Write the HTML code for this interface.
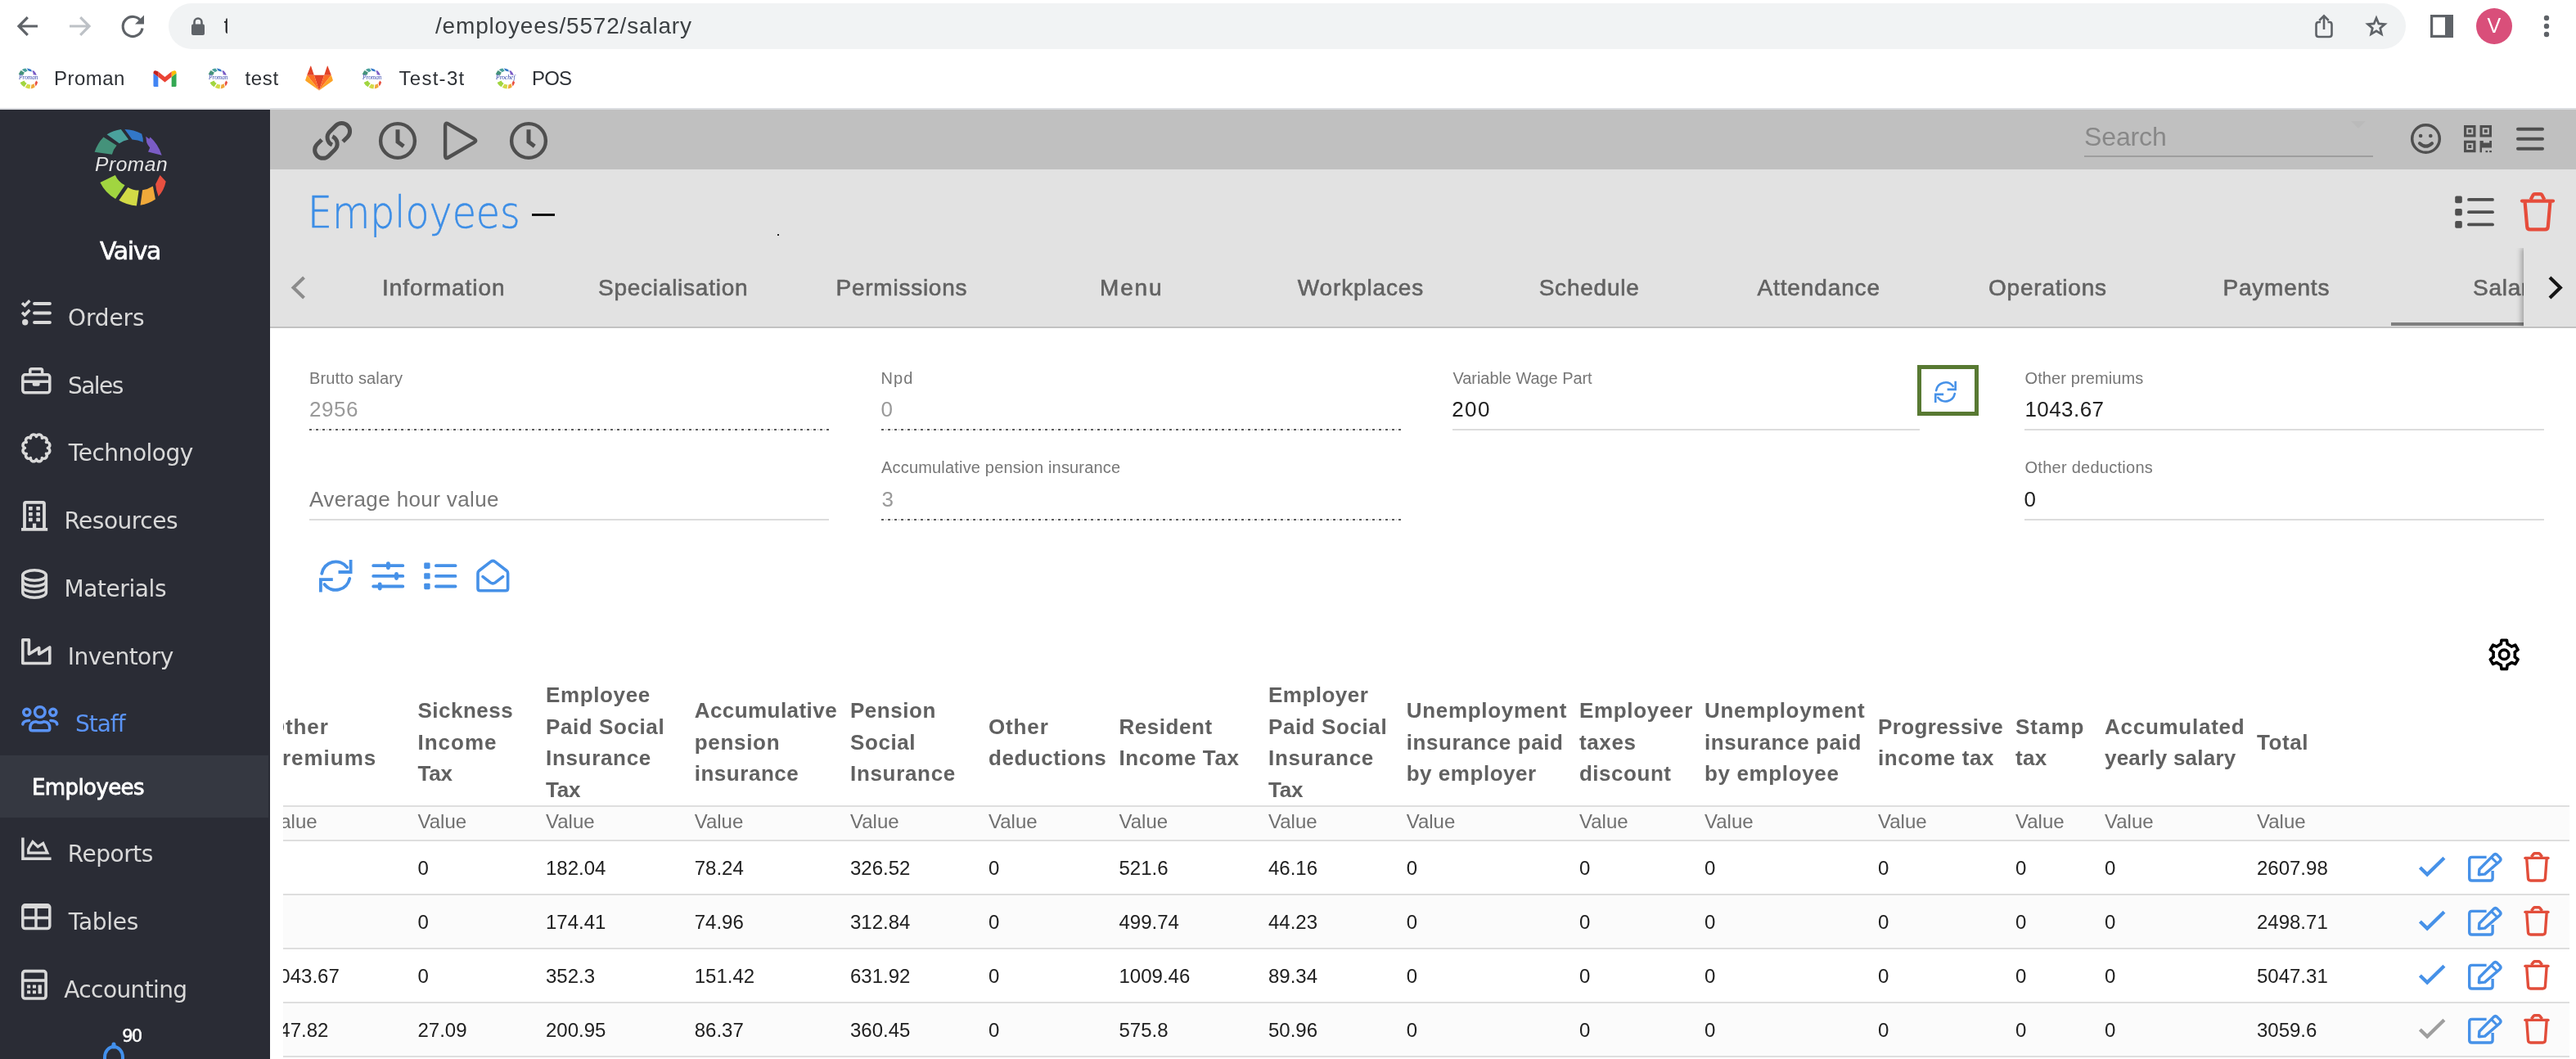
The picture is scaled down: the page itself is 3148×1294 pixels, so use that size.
<!DOCTYPE html>
<html lang="en"><head><meta charset="utf-8"><title>Employees – salary</title>
<style>
html,body{margin:0;padding:0}
body{width:3148px;height:1294px;overflow:hidden;position:relative;background:#fff;font-family:"Liberation Sans",sans-serif}
table{font-family:"Liberation Sans",sans-serif}
#root{position:absolute;left:0;top:0;width:3148px;height:1294px;overflow:hidden;will-change:transform}
th,td{padding:0;text-align:left;white-space:nowrap;overflow:visible}
tr.h th{height:156px;box-sizing:border-box;font-weight:bold;font-size:26px;line-height:38.5px;color:#616161;letter-spacing:0.3px;vertical-align:middle;border-bottom:2px solid #dedede}
tr.h th div{position:relative;top:0.5px}
tr.v td{height:42px;box-sizing:border-box;font-size:24px;line-height:24px;color:#707070;background:#fbfbfb;border-bottom:2px solid #dedede;padding-top:6px;vertical-align:top}
tr.r td{height:66px;box-sizing:border-box;font-size:24px;line-height:24px;color:#212121;border-bottom:2px solid #dedede;padding-top:20.5px;vertical-align:top}
tr.alt td{background:#fbfbfb}
</style></head>
<body>
<div id="root">
<div id="chrome" style="position:absolute;left:0;top:0;width:3148px;height:134px;background:#fff;">
<div style="position:absolute;left:0;top:132px;width:3148px;height:2px;background:#dadce0"></div>
<div style="position:absolute;left:206px;top:4px;width:2734px;height:56px;border-radius:28px;background:#f1f3f4"></div>
<svg style="position:absolute;left:0;top:0" width="3148" height="64" viewBox="0 0 3148 64" fill="none" stroke-linecap="butt" stroke-linejoin="miter">
<path d="M46 32 H24 M33.8 21.2 L23 32 L33.8 42.8" stroke="#5f6368" stroke-width="3.2"/>
<path d="M85 32 H108 M98.2 21.2 L109 32 L98.2 42.8" stroke="#bdc1c6" stroke-width="3.2"/>
<path d="M172.6 26.5 A12 12 0 1 0 174 34.5" stroke="#5f6368" stroke-width="3.2"/>
<path d="M176 18.5 V29.5 H165 Z" fill="#5f6368"/>
<rect x="234" y="29.5" width="16" height="13.5" rx="2" fill="#5f6368"/><path d="M237.5 30 V27 A4.5 4.5 0 0 1 246.5 27 V30" stroke="#5f6368" stroke-width="2.6"/>
<path d="M2836 27 H2833.5 Q2830.5 27 2830.5 30 V42 Q2830.5 45 2833.5 45 H2846.5 Q2849.5 45 2849.5 42 V30 Q2849.5 27 2847 27 H2844.5" stroke="#5f6368" stroke-width="2.6"/>
<path d="M2840 36 V20 M2834.3 25 L2840 19.3 L2845.7 25" stroke="#5f6368" stroke-width="2.6"/>
<polygon points="2904.00,22.00 2906.88,28.94 2914.37,29.53 2908.66,34.41 2910.41,41.72 2904.00,37.80 2897.59,41.72 2899.34,34.41 2893.63,29.53 2901.12,28.94" stroke="#5f6368" stroke-width="2.7" stroke-linejoin="miter"/>
<rect x="2971.6" y="19.6" width="24.8" height="24.8" stroke="#5f6368" stroke-width="3.2"/><rect x="2988" y="19" width="10" height="27" fill="#5f6368"/>
<circle cx="3112" cy="22" r="3.2" fill="#5f6368"/>
<circle cx="3112" cy="32" r="3.2" fill="#5f6368"/>
<circle cx="3112" cy="42" r="3.2" fill="#5f6368"/>
</svg>
<div style="position:absolute;left:3026px;top:10px;width:44px;height:44px;border-radius:22px;background:#d94f7a"></div>
<span style="position:absolute;white-space:nowrap;left:3039.50px;top:19.14px;font:normal normal 25px/25px 'Liberation Sans',sans-serif;color:#fff;">V</span>
<span style="position:absolute;white-space:nowrap;left:273.50px;top:17.80px;font:normal normal 28px/28px 'Liberation Sans',sans-serif;color:#202124;clip-path:inset(0 3.5px 0 0);">t</span>
<span style="position:absolute;white-space:nowrap;left:532.00px;top:17.80px;font:normal normal 28px/28px 'Liberation Sans',sans-serif;color:#3c4043;letter-spacing:0.823px;">/employees/5572/salary</span>
<svg style="position:absolute;left:0;top:0" width="660" height="134" viewBox="0 0 660 134"><g transform="translate(-8.26 41.18) scale(0.2681)"><path fill="#44927a" d="M115.6 185.8 A47 47 0 0 1 126.5 167.4 L142.6 177.8 A26 26 0 0 0 136.9 188.7 Z"/><path fill="#4aa19c" d="M130.6 164.3 A47 47 0 0 1 147.8 158 L157.1 170.4 A30 30 0 0 0 145.8 175.2 Z"/><path fill="#3277c8" d="M152.4 158 A47 47 0 0 1 173.2 163.5 Q175 168.5 174.9 173.7 A33 33 0 0 0 161.5 170.4 Z"/><path fill="#7a5cc5" d="M178.2 166.7 L182.3 169.8 L183.6 167.6 Q193.5 176.5 197.7 189.7 L181 185.4 L183.2 180.4 Q180.5 177.5 179.3 174.3 Z"/><path fill="#e85040" d="M195.6 214.1 L202.7 221.7 Q200.5 232.5 193.6 240 Q190.5 232 190.1 225 Z"/><path fill="#f0a93a" d="M189.9 243.4 A47 47 0 0 1 171.5 250.8 L174.1 232.2 A30 30 0 0 0 186.9 227.6 Z"/><path fill="#d2da46" d="M166.9 251.5 A47 47 0 0 1 145.4 244.8 L156.3 228.9 A27 27 0 0 0 169.7 232.6 Z"/><path fill="#a1d540" d="M141.1 243 A47 47 0 0 1 122.4 223 L140.8 213.9 A26 26 0 0 0 152.6 226.3 Z"/></g><text x="34.8" y="97.4" text-anchor="middle" font-family="Liberation Serif, serif" font-style="italic" font-size="7.6" fill="#3b4bb0" textLength="23.5" lengthAdjust="spacingAndGlyphs">Proman</text></svg>
<span style="position:absolute;white-space:nowrap;left:66.00px;top:84.18px;font:normal normal 24px/24px 'Liberation Sans',sans-serif;color:#2d3035;letter-spacing:0.463px;">Proman</span>
<svg style="position:absolute;left:187.4px;top:84.5px" width="29" height="23" viewBox="0 0 32 24" preserveAspectRatio="none"><path d="M2 22 H7 V9.5 L0.5 4.6 V20.5 Q0.5 22 2 22Z" fill="#4285f4"/><path d="M25 22 H30 Q31.5 22 31.5 20.5 V4.6 L25 9.5Z" fill="#34a853"/><path d="M25 2.6 V9.5 L31.5 4.6 V3.8 Q31.5 1.5 29.3 1.2 Q28 1.1 27 1.9Z" fill="#fbbc04"/><path d="M7 9.5 V2.6 L16 9.4 L25 2.6 V9.5 L16 16.3Z" fill="#ea4335"/><path d="M0.5 3.8 V4.6 L7 9.5 V2.6 L5 1.9 Q4 1.1 2.7 1.2 Q0.5 1.5 0.5 3.8Z" fill="#c5221f"/></svg>
<svg style="position:absolute;left:0;top:0" width="660" height="134" viewBox="0 0 660 134"><g transform="translate(223.74 41.18) scale(0.2681)"><path fill="#44927a" d="M115.6 185.8 A47 47 0 0 1 126.5 167.4 L142.6 177.8 A26 26 0 0 0 136.9 188.7 Z"/><path fill="#4aa19c" d="M130.6 164.3 A47 47 0 0 1 147.8 158 L157.1 170.4 A30 30 0 0 0 145.8 175.2 Z"/><path fill="#3277c8" d="M152.4 158 A47 47 0 0 1 173.2 163.5 Q175 168.5 174.9 173.7 A33 33 0 0 0 161.5 170.4 Z"/><path fill="#7a5cc5" d="M178.2 166.7 L182.3 169.8 L183.6 167.6 Q193.5 176.5 197.7 189.7 L181 185.4 L183.2 180.4 Q180.5 177.5 179.3 174.3 Z"/><path fill="#e85040" d="M195.6 214.1 L202.7 221.7 Q200.5 232.5 193.6 240 Q190.5 232 190.1 225 Z"/><path fill="#f0a93a" d="M189.9 243.4 A47 47 0 0 1 171.5 250.8 L174.1 232.2 A30 30 0 0 0 186.9 227.6 Z"/><path fill="#d2da46" d="M166.9 251.5 A47 47 0 0 1 145.4 244.8 L156.3 228.9 A27 27 0 0 0 169.7 232.6 Z"/><path fill="#a1d540" d="M141.1 243 A47 47 0 0 1 122.4 223 L140.8 213.9 A26 26 0 0 0 152.6 226.3 Z"/></g><text x="266.8" y="97.4" text-anchor="middle" font-family="Liberation Serif, serif" font-style="italic" font-size="7.6" fill="#3b4bb0" textLength="23.5" lengthAdjust="spacingAndGlyphs">Proman</text></svg>
<span style="position:absolute;white-space:nowrap;left:299.50px;top:84.18px;font:normal normal 24px/24px 'Liberation Sans',sans-serif;color:#2d3035;letter-spacing:0.661px;">test</span>
<svg style="position:absolute;left:373px;top:80px" width="34" height="32" viewBox="0 0 34 32"><path d="M17 30.5 L23.2 11.8 H10.8Z" fill="#e24329"/><path d="M17 30.5 L10.8 11.8 H2.2Z" fill="#fc6d26"/><path d="M2.2 11.8 L0.3 17.5 Q0 18.5 0.8 19.1 L17 30.5Z" fill="#fca326"/><path d="M2.2 11.8 H10.8 L7.1 0.8 Q6.8 0.2 6.5 0.8Z" fill="#e24329"/><path d="M17 30.5 L23.2 11.8 H31.8Z" fill="#fc6d26"/><path d="M31.8 11.8 L33.7 17.5 Q34 18.5 33.2 19.1 L17 30.5Z" fill="#fca326"/><path d="M31.8 11.8 H23.2 L26.9 0.8 Q27.2 0.2 27.5 0.8Z" fill="#e24329"/></svg>
<svg style="position:absolute;left:0;top:0" width="660" height="134" viewBox="0 0 660 134"><g transform="translate(411.74 41.18) scale(0.2681)"><path fill="#44927a" d="M115.6 185.8 A47 47 0 0 1 126.5 167.4 L142.6 177.8 A26 26 0 0 0 136.9 188.7 Z"/><path fill="#4aa19c" d="M130.6 164.3 A47 47 0 0 1 147.8 158 L157.1 170.4 A30 30 0 0 0 145.8 175.2 Z"/><path fill="#3277c8" d="M152.4 158 A47 47 0 0 1 173.2 163.5 Q175 168.5 174.9 173.7 A33 33 0 0 0 161.5 170.4 Z"/><path fill="#7a5cc5" d="M178.2 166.7 L182.3 169.8 L183.6 167.6 Q193.5 176.5 197.7 189.7 L181 185.4 L183.2 180.4 Q180.5 177.5 179.3 174.3 Z"/><path fill="#e85040" d="M195.6 214.1 L202.7 221.7 Q200.5 232.5 193.6 240 Q190.5 232 190.1 225 Z"/><path fill="#f0a93a" d="M189.9 243.4 A47 47 0 0 1 171.5 250.8 L174.1 232.2 A30 30 0 0 0 186.9 227.6 Z"/><path fill="#d2da46" d="M166.9 251.5 A47 47 0 0 1 145.4 244.8 L156.3 228.9 A27 27 0 0 0 169.7 232.6 Z"/><path fill="#a1d540" d="M141.1 243 A47 47 0 0 1 122.4 223 L140.8 213.9 A26 26 0 0 0 152.6 226.3 Z"/></g><text x="454.8" y="97.4" text-anchor="middle" font-family="Liberation Serif, serif" font-style="italic" font-size="7.6" fill="#3b4bb0" textLength="23.5" lengthAdjust="spacingAndGlyphs">Proman</text></svg>
<span style="position:absolute;white-space:nowrap;left:487.50px;top:84.18px;font:normal normal 24px/24px 'Liberation Sans',sans-serif;color:#2d3035;letter-spacing:1.274px;">Test-3t</span>
<svg style="position:absolute;left:0;top:0" width="660" height="134" viewBox="0 0 660 134"><g transform="translate(574.74 41.18) scale(0.2681)"><path fill="#44927a" d="M115.6 185.8 A47 47 0 0 1 126.5 167.4 L142.6 177.8 A26 26 0 0 0 136.9 188.7 Z"/><path fill="#4aa19c" d="M130.6 164.3 A47 47 0 0 1 147.8 158 L157.1 170.4 A30 30 0 0 0 145.8 175.2 Z"/><path fill="#3277c8" d="M152.4 158 A47 47 0 0 1 173.2 163.5 Q175 168.5 174.9 173.7 A33 33 0 0 0 161.5 170.4 Z"/><path fill="#7a5cc5" d="M178.2 166.7 L182.3 169.8 L183.6 167.6 Q193.5 176.5 197.7 189.7 L181 185.4 L183.2 180.4 Q180.5 177.5 179.3 174.3 Z"/><path fill="#e85040" d="M195.6 214.1 L202.7 221.7 Q200.5 232.5 193.6 240 Q190.5 232 190.1 225 Z"/><path fill="#f0a93a" d="M189.9 243.4 A47 47 0 0 1 171.5 250.8 L174.1 232.2 A30 30 0 0 0 186.9 227.6 Z"/><path fill="#d2da46" d="M166.9 251.5 A47 47 0 0 1 145.4 244.8 L156.3 228.9 A27 27 0 0 0 169.7 232.6 Z"/><path fill="#a1d540" d="M141.1 243 A47 47 0 0 1 122.4 223 L140.8 213.9 A26 26 0 0 0 152.6 226.3 Z"/></g><text x="617.8" y="97.4" text-anchor="middle" font-family="Liberation Serif, serif" font-style="italic" font-size="7.6" fill="#2a3fa8" textLength="23.5" lengthAdjust="spacingAndGlyphs">Prochef</text></svg>
<span style="position:absolute;white-space:nowrap;left:650.00px;top:84.18px;font:normal normal 24px/24px 'Liberation Sans',sans-serif;color:#2d3035;letter-spacing:-0.838px;">POS</span>
</div>
<div id="sidebar" style="position:absolute;left:0;top:134px;width:330px;height:1160px;background:#2a2c35;overflow:hidden">
<div style="position:absolute;left:0;top:789px;width:328px;height:76px;background:#353841"></div>
<div style="position:absolute;left:0;top:-134px;width:330px;height:1294px">
<svg style="position:absolute;left:0;top:134px" width="330" height="140" viewBox="0 134 330 140"><g transform="translate(0.00 0.00) scale(1.0000)"><path fill="#44927a" d="M115.6 185.8 A47 47 0 0 1 126.5 167.4 L142.6 177.8 A26 26 0 0 0 136.9 188.7 Z"/><path fill="#4aa19c" d="M130.6 164.3 A47 47 0 0 1 147.8 158 L157.1 170.4 A30 30 0 0 0 145.8 175.2 Z"/><path fill="#3277c8" d="M152.4 158 A47 47 0 0 1 173.2 163.5 Q175 168.5 174.9 173.7 A33 33 0 0 0 161.5 170.4 Z"/><path fill="#7a5cc5" d="M178.2 166.7 L182.3 169.8 L183.6 167.6 Q193.5 176.5 197.7 189.7 L181 185.4 L183.2 180.4 Q180.5 177.5 179.3 174.3 Z"/><path fill="#e85040" d="M195.6 214.1 L202.7 221.7 Q200.5 232.5 193.6 240 Q190.5 232 190.1 225 Z"/><path fill="#f0a93a" d="M189.9 243.4 A47 47 0 0 1 171.5 250.8 L174.1 232.2 A30 30 0 0 0 186.9 227.6 Z"/><path fill="#d2da46" d="M166.9 251.5 A47 47 0 0 1 145.4 244.8 L156.3 228.9 A27 27 0 0 0 169.7 232.6 Z"/><path fill="#a1d540" d="M141.1 243 A47 47 0 0 1 122.4 223 L140.8 213.9 A26 26 0 0 0 152.6 226.3 Z"/></g></svg>
<span style="position:absolute;white-space:nowrap;left:116.00px;top:188.86px;font:italic normal 24.5px/24.5px 'Liberation Sans',sans-serif;color:#e4e4e4;letter-spacing:0.568px;">Proman</span>
<span style="position:absolute;white-space:nowrap;left:122.00px;top:291.62px;font:normal normal 30px/30px 'DejaVu Sans',sans-serif;color:#fff;letter-spacing:-1.417px;-webkit-text-stroke:0.65px #fff;">Vaiva</span>
<svg style="position:absolute;left:0;top:340px" width="330" height="954" viewBox="0 340 330 954" fill="none" stroke="#d9d9d9" stroke-linecap="round" stroke-linejoin="round">
<g stroke-width="3.8"><path d="M42 371 H61 M42 382.5 H61 M42 394 H61"/></g>
<g stroke-width="3.4" stroke-linecap="butt" stroke-linejoin="miter"><path d="M27 370.2 L30.3 373.4 L36.3 367.2"/><path d="M27 381.8 L30.3 385 L36.3 378.8"/></g>
<circle cx="30.7" cy="393.8" r="3.7" fill="#d9d9d9" stroke="none"/>
<g stroke-width="3.5"><rect x="27.8" y="457.8" width="33" height="22" rx="3"/><path d="M36.8 457 V452.6 Q36.8 450.8 38.6 450.8 H49.8 Q51.6 450.8 51.6 452.6 V457" stroke-linecap="butt"/><path d="M28 466.2 H60.6" stroke-linecap="butt"/></g>
<path d="M39.7 467 H48.6 V470 Q48.6 471.8 46.8 471.8 H41.5 Q39.7 471.8 39.7 470Z" fill="#d9d9d9" stroke="none"/>
<path d="M58.35 547.40 A3.62 3.62 0 0 1 56.48 554.38 A3.62 3.62 0 0 1 51.38 559.48 A3.62 3.62 0 0 1 44.40 561.35 A3.62 3.62 0 0 1 37.42 559.48 A3.62 3.62 0 0 1 32.32 554.38 A3.62 3.62 0 0 1 30.45 547.40 A3.62 3.62 0 0 1 32.32 540.42 A3.62 3.62 0 0 1 37.42 535.32 A3.62 3.62 0 0 1 44.40 533.45 A3.62 3.62 0 0 1 51.38 535.32 A3.62 3.62 0 0 1 56.48 540.42 A3.62 3.62 0 0 1 58.35 547.40 Z" fill="none" stroke-width="3.5" stroke-linejoin="round"/>
<g stroke-width="3.8" stroke-linecap="butt" stroke-linejoin="miter"><path d="M30 645 V615.5 Q30 613.9 31.6 613.9 H52.4 Q54 613.9 54 615.5 V645"/><path d="M26 646.9 H58.2"/></g>
<rect x="35" y="619" width="4.7" height="4.4" rx="0.6" fill="#d9d9d9" stroke="none"/>
<rect x="35" y="626" width="4.7" height="4.4" rx="0.6" fill="#d9d9d9" stroke="none"/>
<rect x="35" y="632.8" width="4.7" height="4.4" rx="0.6" fill="#d9d9d9" stroke="none"/>
<rect x="44.3" y="619" width="4.7" height="4.4" rx="0.6" fill="#d9d9d9" stroke="none"/>
<rect x="44.3" y="626" width="4.7" height="4.4" rx="0.6" fill="#d9d9d9" stroke="none"/>
<rect x="44.3" y="632.8" width="4.7" height="4.4" rx="0.6" fill="#d9d9d9" stroke="none"/>
<rect x="39.9" y="639.6" width="4.3" height="6" fill="#d9d9d9" stroke="none"/>
<g stroke-width="3.5"><ellipse cx="42.1" cy="703" rx="14.3" ry="6.3"/><path d="M27.8 703 V724 A14.3 6.3 0 0 0 56.4 724 V703"/><path d="M27.8 710 A14.3 6.3 0 0 0 56.4 710"/><path d="M27.8 717 A14.3 6.3 0 0 0 56.4 717"/></g>
<path stroke-width="3.6" d="M27.8 781.9 H35.4 V799.3 L47.7 791.6 V799.3 L60.8 791 V810.5 H27.8 Z"/>
<g stroke="#5a93f5" stroke-width="3.5"><circle cx="48.8" cy="870" r="6.3"/><circle cx="32.8" cy="870.3" r="4.1"/><circle cx="64.8" cy="870.3" r="4.1"/><path d="M36.8 890 Q36.8 881.7 44 881.7 Q46.4 883 48.8 883 Q51.2 883 53.6 881.7 Q60.8 881.7 60.8 890 Q60.8 892.8 58 892.8 H39.6 Q36.8 892.8 36.8 890Z"/><path d="M27.8 885 Q28.2 880.6 35.8 880.4"/><path d="M61.8 880.4 Q69.4 880.6 69.8 885"/></g>
<g stroke-width="3.5" stroke-linecap="butt" stroke-linejoin="miter"><path d="M27.9 1023.6 V1049.2 H62.6"/><path stroke-width="3.2" d="M34.7 1042.2 V1037.4 L40 1028.5 L46.3 1034.6 L52.7 1030.4 L57.9 1042.2 Z"/></g>
<g stroke-width="3.5"><rect x="27.8" y="1105.8" width="33" height="28.8" rx="3"/><path d="M29 1107.5 H59.6" stroke-width="5" stroke-linecap="butt"/><path d="M44 1108 V1134 M28 1121.4 H60.6" stroke-linecap="butt"/></g>
<g stroke-width="3.6"><rect x="27.7" y="1186.6" width="28.4" height="33.4" rx="3"/><path d="M28 1198 H56" stroke-linecap="butt"/></g>
<rect x="33.1" y="1203.4" width="4.1" height="4.1" rx="0.5" fill="#d9d9d9" stroke="none"/>
<rect x="39.9" y="1203.4" width="4.1" height="4.1" rx="0.5" fill="#d9d9d9" stroke="none"/>
<rect x="33.1" y="1210.2" width="4.1" height="4.1" rx="0.5" fill="#d9d9d9" stroke="none"/>
<rect x="39.9" y="1210.2" width="4.1" height="4.1" rx="0.5" fill="#d9d9d9" stroke="none"/>
<rect x="46.6" y="1203.4" width="4.3" height="10.9" rx="0.5" fill="#d9d9d9" stroke="none"/>
<g stroke="#4290ec" stroke-width="4"><path d="M128 1300 V1292 A11 13 0 0 1 150 1292 V1300"/><path d="M139 1276 V1279" stroke-width="5"/></g>
</svg>
<span style="position:absolute;white-space:nowrap;left:83.00px;top:374.71px;font:normal normal 28px/28px 'DejaVu Sans',sans-serif;color:#d9d9d9;letter-spacing:-0.114px;">Orders</span>
<span style="position:absolute;white-space:nowrap;left:83.00px;top:458.01px;font:normal normal 28px/28px 'DejaVu Sans',sans-serif;color:#d9d9d9;letter-spacing:-1.559px;">Sales</span>
<span style="position:absolute;white-space:nowrap;left:83.80px;top:539.71px;font:normal normal 28px/28px 'DejaVu Sans',sans-serif;color:#d9d9d9;letter-spacing:-0.475px;">Technology</span>
<span style="position:absolute;white-space:nowrap;left:78.40px;top:623.01px;font:normal normal 28px/28px 'DejaVu Sans',sans-serif;color:#d9d9d9;letter-spacing:-0.488px;">Resources</span>
<span style="position:absolute;white-space:nowrap;left:78.40px;top:706.01px;font:normal normal 28px/28px 'DejaVu Sans',sans-serif;color:#d9d9d9;letter-spacing:-0.406px;">Materials</span>
<span style="position:absolute;white-space:nowrap;left:82.70px;top:789.01px;font:normal normal 28px/28px 'DejaVu Sans',sans-serif;color:#d9d9d9;letter-spacing:-0.521px;">Inventory</span>
<span style="position:absolute;white-space:nowrap;left:82.70px;top:1029.71px;font:normal normal 28px/28px 'DejaVu Sans',sans-serif;color:#d9d9d9;letter-spacing:-0.470px;">Reports</span>
<span style="position:absolute;white-space:nowrap;left:83.80px;top:1112.81px;font:normal normal 28px/28px 'DejaVu Sans',sans-serif;color:#d9d9d9;letter-spacing:-0.281px;">Tables</span>
<span style="position:absolute;white-space:nowrap;left:78.30px;top:1196.21px;font:normal normal 28px/28px 'DejaVu Sans',sans-serif;color:#d9d9d9;letter-spacing:-0.620px;">Accounting</span>
<span style="position:absolute;white-space:nowrap;left:91.90px;top:871.31px;font:normal normal 28px/28px 'DejaVu Sans',sans-serif;color:#5a93f5;letter-spacing:-0.978px;">Staff</span>
<span style="position:absolute;white-space:nowrap;left:39.00px;top:949.00px;font:normal normal 26px/26px 'DejaVu Sans',sans-serif;color:#fff;letter-spacing:-0.596px;-webkit-text-stroke:0.8px #fff;">Employees</span>
<span style="position:absolute;white-space:nowrap;left:149.20px;top:1256.43px;font:normal normal 21px/21px 'DejaVu Sans',sans-serif;color:#fff;letter-spacing:-1.761px;-webkit-text-stroke:0.5px #fff;">90</span>
</div></div>
<div id="toolbar" style="position:absolute;left:330px;top:134px;width:2818px;height:73px;background:#c0c0c0"></div>
<div id="header" style="position:absolute;left:330px;top:207px;width:2818px;height:192px;background:#e2e2e2;border-bottom:2px solid #c2c2c2"></div>
<svg style="position:absolute;left:330px;top:134px" width="2818" height="267" viewBox="330 134 2818 267" fill="none" stroke="#4f4f4f" stroke-linecap="round" stroke-linejoin="round">
<g stroke-width="5" stroke-linecap="butt" transform="translate(406.1 171.9) rotate(-45)"><path d="M-3.74 3.58 A10 10 0 0 1 5.6 -10 H16.2 A10 10 0 0 1 16.2 10 H8.3"/><path d="M-3.74 3.58 A10 10 0 0 1 5.6 -10 H16.2 A10 10 0 0 1 16.2 10 H8.3" transform="rotate(180)"/></g>
<circle cx="486.0" cy="172" r="20.9" stroke-width="4.4"/>
<path d="M486.0 158.2 V173.3 L493.3 178.7" stroke-width="5" stroke-linecap="butt" stroke-linejoin="miter"/>
<circle cx="646.0" cy="172" r="20.9" stroke-width="4.4"/>
<path d="M646.0 158.2 V173.3 L653.3 178.7" stroke-width="5" stroke-linecap="butt" stroke-linejoin="miter"/>
<path d="M544.1 153.4 Q544.1 149.3 547.7 151.3 L579.3 169.6 Q583.2 171.9 579.3 174.2 L547.7 192.5 Q544.1 194.5 544.1 190.4 Z" stroke-width="4.4"/>
<path d="M2547 191 H2900" stroke="#9e9e9e" stroke-width="2" stroke-linecap="butt"/>
<path d="M2873 148 H2891 L2882 157Z" fill="#bababa" stroke="none"/>
<circle cx="2964.5" cy="169.5" r="16.8" stroke-width="3.5"/>
<circle cx="2958.1" cy="166" r="2.3" fill="#4f4f4f" stroke="none"/><circle cx="2970.3" cy="166" r="2.3" fill="#4f4f4f" stroke="none"/>
<path d="M2957 175.2 Q2964.5 182.2 2972 175.2" stroke-width="4.1"/>
<rect x="3012.6" y="154.6" width="11.3" height="11.3" stroke-width="3.2" stroke-linejoin="miter"/><rect x="3016.2" y="158.2" width="4.1" height="4.1" fill="#4f4f4f" stroke="none"/><rect x="3032.1" y="154.6" width="11.3" height="11.3" stroke-width="3.2" stroke-linejoin="miter"/><rect x="3035.7" y="158.2" width="4.1" height="4.1" fill="#4f4f4f" stroke="none"/><rect x="3012.6" y="173.29999999999998" width="11.3" height="11.3" stroke-width="3.2" stroke-linejoin="miter"/><rect x="3016.2" y="176.89999999999998" width="4.1" height="4.1" fill="#4f4f4f" stroke="none"/>
<path d="M3030.5 172 H3034.8 V174.5 H3042.2 V172 H3045 V180.4 H3033 V186.2 H3030.5Z" fill="#4f4f4f" stroke="none"/>
<rect x="3037.5" y="184" width="2.7" height="2.2" fill="#4f4f4f" stroke="none"/><rect x="3042.2" y="184" width="2.7" height="2.2" fill="#4f4f4f" stroke="none"/>
<path d="M3077 157.7 H3107 M3077 169.7 H3107 M3077 181.7 H3107" stroke-width="4"/>
<rect x="3000.2" y="239.6" width="8.6" height="8.6" rx="1.8" fill="#4f4f4f" stroke="none"/>
<path d="M3017 243.9 H3046" stroke-width="3.8"/>
<rect x="3000.2" y="254.89999999999998" width="8.6" height="8.6" rx="1.8" fill="#4f4f4f" stroke="none"/>
<path d="M3017 259.2 H3046" stroke-width="3.8"/>
<rect x="3000.2" y="270.09999999999997" width="8.6" height="8.6" rx="1.8" fill="#4f4f4f" stroke="none"/>
<path d="M3017 274.4 H3046" stroke-width="3.8"/>
<g stroke="#e64c3b" stroke-width="4.2"><path d="M3082 245.6 H3120" /><path d="M3092.6 244 L3095.5 238.4 Q3096.2 237.2 3097.6 237.2 H3104.4 Q3105.8 237.2 3106.5 238.4 L3109.4 244" stroke-linecap="butt"/><path d="M3085.6 247 L3088.2 277 Q3088.5 280.4 3091.8 280.4 H3110.2 Q3113.5 280.4 3113.8 277 L3116.4 247" stroke-linecap="butt"/></g>
<path d="M371.5 339 L358.5 351.5 L371.5 364" stroke="#8c8c8c" stroke-width="4" stroke-linecap="butt" stroke-linejoin="miter"/>
</svg>
<span style="position:absolute;white-space:nowrap;left:375.50px;top:232.74px;font:normal normal 53.5px/53.5px 'DejaVu Sans Light',sans-serif;color:#3d8ee6;-webkit-text-stroke:0.5px #3d8ee6;font-family:'DejaVu Sans Light','DejaVu Sans',sans-serif;font-weight:200;transform-origin:0 0;transform:scaleX(0.887);">Employees</span>
<div style="position:absolute;left:650px;top:261px;width:28px;height:3px;background:#111"></div>
<div style="position:absolute;left:950px;top:286px;width:2px;height:2px;background:#222"></div>
<span style="position:absolute;white-space:nowrap;left:2547.00px;top:150.91px;font:normal normal 32px/32px 'Liberation Sans',sans-serif;color:#888;letter-spacing:-0.119px;">Search</span>
<div id="tabs" style="position:absolute;left:402px;top:303px;width:2682px;height:96px;overflow:hidden">
<div style="position:absolute;left:-402px;top:-303px">
<span style="position:absolute;white-space:nowrap;left:467.00px;top:338.00px;font:normal normal 28px/28px 'Liberation Sans',sans-serif;color:#626262;letter-spacing:0.950px;-webkit-text-stroke:0.6px #626262;">Information</span>
<span style="position:absolute;white-space:nowrap;left:731.00px;top:338.00px;font:normal normal 28px/28px 'Liberation Sans',sans-serif;color:#626262;letter-spacing:0.754px;-webkit-text-stroke:0.6px #626262;">Specialisation</span>
<span style="position:absolute;white-space:nowrap;left:1021.50px;top:338.00px;font:normal normal 28px/28px 'Liberation Sans',sans-serif;color:#626262;letter-spacing:0.752px;-webkit-text-stroke:0.6px #626262;">Permissions</span>
<span style="position:absolute;white-space:nowrap;left:1344.10px;top:338.00px;font:normal normal 28px/28px 'Liberation Sans',sans-serif;color:#626262;letter-spacing:1.777px;-webkit-text-stroke:0.6px #626262;">Menu</span>
<span style="position:absolute;white-space:nowrap;left:1585.85px;top:338.00px;font:normal normal 28px/28px 'Liberation Sans',sans-serif;color:#626262;letter-spacing:0.838px;-webkit-text-stroke:0.6px #626262;">Workplaces</span>
<span style="position:absolute;white-space:nowrap;left:1880.65px;top:338.00px;font:normal normal 28px/28px 'Liberation Sans',sans-serif;color:#626262;letter-spacing:0.788px;-webkit-text-stroke:0.6px #626262;">Schedule</span>
<span style="position:absolute;white-space:nowrap;left:2147.50px;top:338.00px;font:normal normal 28px/28px 'Liberation Sans',sans-serif;color:#626262;letter-spacing:0.878px;-webkit-text-stroke:0.6px #626262;">Attendance</span>
<span style="position:absolute;white-space:nowrap;left:2430.00px;top:338.00px;font:normal normal 28px/28px 'Liberation Sans',sans-serif;color:#626262;letter-spacing:0.782px;-webkit-text-stroke:0.6px #626262;">Operations</span>
<span style="position:absolute;white-space:nowrap;left:2716.60px;top:338.00px;font:normal normal 28px/28px 'Liberation Sans',sans-serif;color:#626262;letter-spacing:0.758px;-webkit-text-stroke:0.6px #626262;">Payments</span>
<span style="position:absolute;white-space:nowrap;left:3022.00px;top:338.00px;font:normal normal 28px/28px 'Liberation Sans',sans-serif;color:#626262;letter-spacing:0.727px;-webkit-text-stroke:0.6px #626262;">Salary</span>
</div>
<div style="position:absolute;left:2520px;top:91px;width:162px;height:4px;background:#808080"></div>
</div>
<div style="position:absolute;left:3084px;top:303px;width:64px;height:96px;background:#e2e2e2;box-shadow:-3px 0 6px rgba(0,0,0,0.28);clip-path:inset(0 0 0 -14px)"></div>
<svg style="position:absolute;left:3100px;top:330px" width="44" height="44" viewBox="3100 330 44 44" fill="none"><path d="M3116 339 L3128.8 351.5 L3116 364" stroke="#151515" stroke-width="4.2" stroke-linecap="butt" stroke-linejoin="miter"/></svg>
<div id="content" style="position:absolute;left:330px;top:401px;width:2818px;height:893px;background:#fff"></div>
<span style="position:absolute;white-space:nowrap;left:378.00px;top:451.87px;font:normal normal 20px/20px 'Liberation Sans',sans-serif;color:#767676;letter-spacing:0.145px;">Brutto salary</span>
<span style="position:absolute;white-space:nowrap;left:378.00px;top:486.79px;font:normal normal 26px/26px 'Liberation Sans',sans-serif;color:#9a9a9a;letter-spacing:0.540px;">2956</span>
<div style="position:absolute;left:378px;top:524px;width:635px;height:2px;background:repeating-linear-gradient(to right,#5c5c5c 0 3px,#fff 3px 4px,#e2e2e2 4px 7px,#fff 7px 8px);"></div>
<span style="position:absolute;white-space:nowrap;left:1076.50px;top:451.87px;font:normal normal 20px/20px 'Liberation Sans',sans-serif;color:#767676;letter-spacing:1.117px;">Npd</span>
<span style="position:absolute;white-space:nowrap;left:1076.50px;top:486.79px;font:normal normal 26px/26px 'Liberation Sans',sans-serif;color:#9a9a9a;">0</span>
<div style="position:absolute;left:1077px;top:524px;width:635px;height:2px;background:repeating-linear-gradient(to right,#5c5c5c 0 3px,#fff 3px 4px,#e2e2e2 4px 7px,#fff 7px 8px);"></div>
<span style="position:absolute;white-space:nowrap;left:1775.50px;top:451.87px;font:normal normal 20px/20px 'Liberation Sans',sans-serif;color:#767676;letter-spacing:-0.061px;">Variable Wage Part</span>
<span style="position:absolute;white-space:nowrap;left:1774.30px;top:486.79px;font:normal normal 26px/26px 'Liberation Sans',sans-serif;color:#212121;letter-spacing:1.340px;">200</span>
<div style="position:absolute;left:1775px;top:524px;width:571px;height:2px;background:#dcdcdc;"></div>
<span style="position:absolute;white-space:nowrap;left:2474.50px;top:451.87px;font:normal normal 20px/20px 'Liberation Sans',sans-serif;color:#767676;letter-spacing:0.110px;">Other premiums</span>
<span style="position:absolute;white-space:nowrap;left:2474.50px;top:486.79px;font:normal normal 26px/26px 'Liberation Sans',sans-serif;color:#212121;letter-spacing:0.413px;">1043.67</span>
<div style="position:absolute;left:2474px;top:524px;width:635px;height:2px;background:#dcdcdc;"></div>
<span style="position:absolute;white-space:nowrap;left:378.00px;top:597.49px;font:normal normal 26px/26px 'Liberation Sans',sans-serif;color:#767676;letter-spacing:0.379px;">Average hour value</span>
<div style="position:absolute;left:378px;top:634px;width:635px;height:2px;background:#dcdcdc;"></div>
<span style="position:absolute;white-space:nowrap;left:1077.00px;top:561.07px;font:normal normal 20px/20px 'Liberation Sans',sans-serif;color:#767676;letter-spacing:0.183px;">Accumulative pension insurance</span>
<span style="position:absolute;white-space:nowrap;left:1077.50px;top:596.79px;font:normal normal 26px/26px 'Liberation Sans',sans-serif;color:#9a9a9a;">3</span>
<div style="position:absolute;left:1077px;top:634px;width:635px;height:2px;background:repeating-linear-gradient(to right,#5c5c5c 0 3px,#fff 3px 4px,#e2e2e2 4px 7px,#fff 7px 8px);"></div>
<span style="position:absolute;white-space:nowrap;left:2474.50px;top:561.07px;font:normal normal 20px/20px 'Liberation Sans',sans-serif;color:#767676;letter-spacing:0.266px;">Other deductions</span>
<span style="position:absolute;white-space:nowrap;left:2473.50px;top:596.79px;font:normal normal 26px/26px 'Liberation Sans',sans-serif;color:#212121;">0</span>
<div style="position:absolute;left:2474px;top:634px;width:635px;height:2px;background:#dcdcdc;"></div>
<div style="position:absolute;left:2343px;top:446px;width:65px;height:52px;border:5px solid #587932;background:#fff"></div>
<svg style="position:absolute;left:330px;top:401px" width="2818" height="440" viewBox="330 401 2818 440">
<path d="M2366.14 477.10 A11.50 11.50 0 0 1 2386.69 471.98 M2388.79 481.10 A11.50 11.50 0 0 1 2368.31 485.82 " fill="none" stroke="#4691e8" stroke-width="2.6" stroke-linecap="round"/><path d="M2389.67 465.87 V475.84 H2379.63 M2365.26 492.07 V481.89 H2375.17" fill="none" stroke="#4691e8" stroke-width="2.6" stroke-linecap="butt" stroke-linejoin="miter"/>
<path d="M393.21 700.89 A17.30 17.30 0 0 1 424.12 693.19 M427.28 706.90 A17.30 17.30 0 0 1 396.48 714.01 " fill="none" stroke="#4691e8" stroke-width="3.8" stroke-linecap="round"/><path d="M428.60 684.00 V699.00 H413.50 M391.90 723.40 V708.10 H406.80" fill="none" stroke="#4691e8" stroke-width="3.8" stroke-linecap="butt" stroke-linejoin="miter"/>
<g stroke="#4691e8" stroke-width="3.8" stroke-linecap="round" fill="none"><path d="M456.2 691.2 H492.3 M456.2 703.9 H492.3 M456.2 716.5 H492.3"/><path stroke-width="4.9" d="M474.4 688.6 V693.7 M484.5 701.5 V706.5 M464.2 714 V719.1"/></g>
<rect x="518.2" y="687.5" width="7.4" height="7.4" rx="1.4" fill="#4691e8"/>
<path d="M532.9 691.2 H556.5" stroke="#4691e8" stroke-width="3.8" stroke-linecap="round"/>
<rect x="518.2" y="700.1999999999999" width="7.4" height="7.4" rx="1.4" fill="#4691e8"/>
<path d="M532.9 703.9 H556.5" stroke="#4691e8" stroke-width="3.8" stroke-linecap="round"/>
<rect x="518.2" y="712.8" width="7.4" height="7.4" rx="1.4" fill="#4691e8"/>
<path d="M532.9 716.5 H556.5" stroke="#4691e8" stroke-width="3.8" stroke-linecap="round"/>
<g stroke="#4691e8" stroke-width="3.6" fill="none" stroke-linejoin="round" stroke-linecap="round"><path d="M584 700.5 Q584 698.5 585.6 697.2 L599.6 686.4 Q602.3 684.4 605 686.4 L619 697.2 Q620.6 698.5 620.6 700.5 V719 Q620.6 721.8 617.8 721.8 H586.8 Q584 721.8 584 719 Z"/><path d="M590 704.6 L599.4 711.9 Q602.3 714 605.2 711.9 L614.6 704.6"/></g>
<path d="M3055.43 787.38 L3056.31 787.08 L3056.94 782.20 L3063.46 782.20 L3064.09 787.08 L3064.97 787.38 L3068.57 789.46 L3069.27 790.07 L3073.81 788.17 L3077.07 793.82 L3073.16 796.81 L3073.34 797.72 L3073.34 801.88 L3073.16 802.79 L3077.07 805.78 L3073.81 811.43 L3069.27 809.53 L3068.57 810.14 L3064.97 812.22 L3064.09 812.52 L3063.46 817.40 L3056.94 817.40 L3056.31 812.52 L3055.43 812.22 L3051.83 810.14 L3051.13 809.53 L3046.59 811.43 L3043.33 805.78 L3047.24 802.79 L3047.06 801.88 L3047.06 797.72 L3047.24 796.81 L3043.33 793.82 L3046.59 788.17 L3051.13 790.07 L3051.83 789.46Z" fill="none" stroke="#000" stroke-width="3.6" stroke-linejoin="round"/><circle cx="3060.2" cy="799.8" r="5.7" fill="none" stroke="#000" stroke-width="3.6"/>
</svg>
<div id="tablewrap" style="position:absolute;left:346px;top:826px;width:2794px;height:468px;overflow:hidden">
<table style="position:absolute;left:-18px;top:3px;border-collapse:collapse;table-layout:fixed;width:2812px">
<colgroup>
<col style="width:182.5px">
<col style="width:156.5px">
<col style="width:181.7px">
<col style="width:190.3px">
<col style="width:169.0px">
<col style="width:159.5px">
<col style="width:182.5px">
<col style="width:168.7px">
<col style="width:211.3px">
<col style="width:153.0px">
<col style="width:212.0px">
<col style="width:168.0px">
<col style="width:109.0px">
<col style="width:186.0px">
<col style="width:382.0px">
</colgroup>
<thead><tr class="h">
<th><div><span style="letter-spacing:0.87px">Other</span><br><span style="letter-spacing:1.00px">premiums</span></div></th>
<th><div><span style="letter-spacing:0.50px">Sickness</span><br><span style="letter-spacing:1.00px">Income</span><br><span style="letter-spacing:-0.20px">Tax</span></div></th>
<th><div><span style="letter-spacing:0.62px">Employee</span><br><span style="letter-spacing:0.59px">Paid Social</span><br><span style="letter-spacing:0.68px">Insurance</span><br><span style="letter-spacing:-0.20px">Tax</span></div></th>
<th><div><span style="letter-spacing:0.44px">Accumulative</span><br><span style="letter-spacing:0.70px">pension</span><br><span style="letter-spacing:0.54px">insurance</span></div></th>
<th><div><span style="letter-spacing:0.54px">Pension</span><br><span style="letter-spacing:0.59px">Social</span><br><span style="letter-spacing:0.68px">Insurance</span></div></th>
<th><div><span style="letter-spacing:0.87px">Other</span><br><span style="letter-spacing:0.55px">deductions</span></div></th>
<th><div><span style="letter-spacing:0.55px">Resident</span><br><span style="letter-spacing:0.59px">Income Tax</span></div></th>
<th><div><span style="letter-spacing:0.48px">Employer</span><br><span style="letter-spacing:0.59px">Paid Social</span><br><span style="letter-spacing:0.68px">Insurance</span><br><span style="letter-spacing:-0.20px">Tax</span></div></th>
<th><div><span style="letter-spacing:0.71px">Unemployment</span><br><span style="letter-spacing:0.60px">insurance paid</span><br><span style="letter-spacing:0.53px">by employer</span></div></th>
<th><div><span style="letter-spacing:0.67px">Employeer</span><br><span style="letter-spacing:0.64px">taxes</span><br><span style="letter-spacing:0.52px">discount</span></div></th>
<th><div><span style="letter-spacing:0.71px">Unemployment</span><br><span style="letter-spacing:0.60px">insurance paid</span><br><span style="letter-spacing:0.64px">by employee</span></div></th>
<th><div><span style="letter-spacing:0.38px">Progressive</span><br><span style="letter-spacing:0.63px">income tax</span></div></th>
<th><div><span style="letter-spacing:1.00px">Stamp</span><br><span style="letter-spacing:0.34px">tax</span></div></th>
<th><div><span style="letter-spacing:0.74px">Accumulated</span><br><span style="letter-spacing:0.22px">yearly salary</span></div></th>
<th><div><span style="letter-spacing:0.59px">Total</span></div></th>
</tr><tr class="v">
<td>Value</td>
<td>Value</td>
<td>Value</td>
<td>Value</td>
<td>Value</td>
<td>Value</td>
<td>Value</td>
<td>Value</td>
<td>Value</td>
<td>Value</td>
<td>Value</td>
<td>Value</td>
<td>Value</td>
<td>Value</td>
<td>Value</td>
</tr></thead><tbody>
<tr class="r">
<td></td>
<td>0</td>
<td>182.04</td>
<td>78.24</td>
<td>326.52</td>
<td>0</td>
<td>521.6</td>
<td>46.16</td>
<td>0</td>
<td>0</td>
<td>0</td>
<td>0</td>
<td>0</td>
<td>0</td>
<td>2607.98</td>
</tr>
<tr class="r alt">
<td></td>
<td>0</td>
<td>174.41</td>
<td>74.96</td>
<td>312.84</td>
<td>0</td>
<td>499.74</td>
<td>44.23</td>
<td>0</td>
<td>0</td>
<td>0</td>
<td>0</td>
<td>0</td>
<td>0</td>
<td>2498.71</td>
</tr>
<tr class="r">
<td>1043.67</td>
<td>0</td>
<td>352.3</td>
<td>151.42</td>
<td>631.92</td>
<td>0</td>
<td>1009.46</td>
<td>89.34</td>
<td>0</td>
<td>0</td>
<td>0</td>
<td>0</td>
<td>0</td>
<td>0</td>
<td>5047.31</td>
</tr>
<tr class="r alt">
<td>147.82</td>
<td>27.09</td>
<td>200.95</td>
<td>86.37</td>
<td>360.45</td>
<td>0</td>
<td>575.8</td>
<td>50.96</td>
<td>0</td>
<td>0</td>
<td>0</td>
<td>0</td>
<td>0</td>
<td>0</td>
<td>3059.6</td>
</tr>
</tbody></table>
<svg style="position:absolute;left:0;top:0" width="2794" height="468" viewBox="346 826 2794 468">
<g transform="translate(0 0.00)" fill="none"><path d="M2957.4 1060 L2966.2 1068.5 L2986.9 1048.2" stroke="#4691e8" stroke-width="4.3" stroke-linecap="butt" stroke-linejoin="miter"/><g stroke="#4691e8" stroke-width="3.4" stroke-linejoin="round" stroke-linecap="butt"><path d="M3038.6 1047.4 H3020.7 Q3017.7 1047.4 3017.7 1050.4 V1073 Q3017.7 1076 3020.7 1076 H3043.1 Q3046.1 1076 3046.1 1073 V1064"/><path d="M3029.4 1068.7 L3029.9 1062.3 L3047.4 1044.6 Q3049.5 1042.6 3051.6 1044.6 L3055 1048 Q3057 1050.1 3055 1052.2 L3036.6 1068.1 Z"/><path d="M3044.6 1047.6 L3051.7 1054.7" stroke-width="3"/></g><g stroke="#e24d3a" stroke-width="3.4" stroke-linecap="round" stroke-linejoin="round"><path d="M3085.9 1048.4 H3114"/><path d="M3093.4 1047 L3096 1043.6 Q3096.7 1042.8 3097.8 1042.8 H3102.2 Q3103.3 1042.8 3104 1043.6 L3106.6 1047" stroke-linecap="butt"/><path d="M3087.8 1050 L3089.5 1073.2 Q3089.7 1076 3092.5 1076 H3107.4 Q3110.2 1076 3110.4 1073.2 L3112.1 1050" stroke-linecap="butt"/></g></g>
<g transform="translate(0 66.00)" fill="none"><path d="M2957.4 1060 L2966.2 1068.5 L2986.9 1048.2" stroke="#4691e8" stroke-width="4.3" stroke-linecap="butt" stroke-linejoin="miter"/><g stroke="#4691e8" stroke-width="3.4" stroke-linejoin="round" stroke-linecap="butt"><path d="M3038.6 1047.4 H3020.7 Q3017.7 1047.4 3017.7 1050.4 V1073 Q3017.7 1076 3020.7 1076 H3043.1 Q3046.1 1076 3046.1 1073 V1064"/><path d="M3029.4 1068.7 L3029.9 1062.3 L3047.4 1044.6 Q3049.5 1042.6 3051.6 1044.6 L3055 1048 Q3057 1050.1 3055 1052.2 L3036.6 1068.1 Z"/><path d="M3044.6 1047.6 L3051.7 1054.7" stroke-width="3"/></g><g stroke="#e24d3a" stroke-width="3.4" stroke-linecap="round" stroke-linejoin="round"><path d="M3085.9 1048.4 H3114"/><path d="M3093.4 1047 L3096 1043.6 Q3096.7 1042.8 3097.8 1042.8 H3102.2 Q3103.3 1042.8 3104 1043.6 L3106.6 1047" stroke-linecap="butt"/><path d="M3087.8 1050 L3089.5 1073.2 Q3089.7 1076 3092.5 1076 H3107.4 Q3110.2 1076 3110.4 1073.2 L3112.1 1050" stroke-linecap="butt"/></g></g>
<g transform="translate(0 132.00)" fill="none"><path d="M2957.4 1060 L2966.2 1068.5 L2986.9 1048.2" stroke="#4691e8" stroke-width="4.3" stroke-linecap="butt" stroke-linejoin="miter"/><g stroke="#4691e8" stroke-width="3.4" stroke-linejoin="round" stroke-linecap="butt"><path d="M3038.6 1047.4 H3020.7 Q3017.7 1047.4 3017.7 1050.4 V1073 Q3017.7 1076 3020.7 1076 H3043.1 Q3046.1 1076 3046.1 1073 V1064"/><path d="M3029.4 1068.7 L3029.9 1062.3 L3047.4 1044.6 Q3049.5 1042.6 3051.6 1044.6 L3055 1048 Q3057 1050.1 3055 1052.2 L3036.6 1068.1 Z"/><path d="M3044.6 1047.6 L3051.7 1054.7" stroke-width="3"/></g><g stroke="#e24d3a" stroke-width="3.4" stroke-linecap="round" stroke-linejoin="round"><path d="M3085.9 1048.4 H3114"/><path d="M3093.4 1047 L3096 1043.6 Q3096.7 1042.8 3097.8 1042.8 H3102.2 Q3103.3 1042.8 3104 1043.6 L3106.6 1047" stroke-linecap="butt"/><path d="M3087.8 1050 L3089.5 1073.2 Q3089.7 1076 3092.5 1076 H3107.4 Q3110.2 1076 3110.4 1073.2 L3112.1 1050" stroke-linecap="butt"/></g></g>
<g transform="translate(0 198.00)" fill="none"><path d="M2957.4 1060 L2966.2 1068.5 L2986.9 1048.2" stroke="#9e9e9e" stroke-width="4.3" stroke-linecap="butt" stroke-linejoin="miter"/><g stroke="#4691e8" stroke-width="3.4" stroke-linejoin="round" stroke-linecap="butt"><path d="M3038.6 1047.4 H3020.7 Q3017.7 1047.4 3017.7 1050.4 V1073 Q3017.7 1076 3020.7 1076 H3043.1 Q3046.1 1076 3046.1 1073 V1064"/><path d="M3029.4 1068.7 L3029.9 1062.3 L3047.4 1044.6 Q3049.5 1042.6 3051.6 1044.6 L3055 1048 Q3057 1050.1 3055 1052.2 L3036.6 1068.1 Z"/><path d="M3044.6 1047.6 L3051.7 1054.7" stroke-width="3"/></g><g stroke="#e24d3a" stroke-width="3.4" stroke-linecap="round" stroke-linejoin="round"><path d="M3085.9 1048.4 H3114"/><path d="M3093.4 1047 L3096 1043.6 Q3096.7 1042.8 3097.8 1042.8 H3102.2 Q3103.3 1042.8 3104 1043.6 L3106.6 1047" stroke-linecap="butt"/><path d="M3087.8 1050 L3089.5 1073.2 Q3089.7 1076 3092.5 1076 H3107.4 Q3110.2 1076 3110.4 1073.2 L3112.1 1050" stroke-linecap="butt"/></g></g>
</svg>
</div>
</div>
</body></html>
